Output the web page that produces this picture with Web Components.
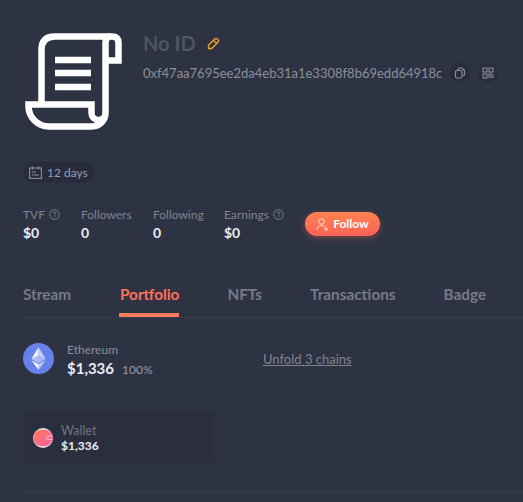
<!DOCTYPE html>
<html><head><meta charset="utf-8">
<style>
html,body{margin:0;padding:0;background:#2e3343;height:502px;overflow:hidden}
body{font-family:Lato,"Noto Sans",sans-serif;color:#fff}
</style></head><body>
<profile-page></profile-page>
<script>
function def(name,html){
  customElements.define(name,class extends HTMLElement{
    constructor(){super();this.attachShadow({mode:'open'}).innerHTML=html;}
  });
}
def('profile-header',`<style>
:host{display:flex;gap:20px;padding:32px 0 0 25px;height:100px;box-sizing:content-box}
svg.logo{width:98px;height:98px;flex:none;margin-top:1px}
.info{display:flex;flex-direction:column}
.name{display:flex;align-items:center;gap:11px;height:22px}
h1{margin:0;font:700 20px/22px Lato;color:#50555f}
.addr{display:flex;align-items:center;margin-top:9px;font:400 13px/20px Lato;color:#8a8f99;white-space:nowrap}
.b{width:20px;height:20px;border-radius:50%;background:#282c3b;display:flex;align-items:center;justify-content:center}
.b svg{width:12px;height:12px}
.b.one{margin-left:8px}.b.two{margin-left:8px}
</style>
<svg class="logo" viewBox="0 0 98 98" fill="none" stroke="#fff" stroke-width="6.500">
<path d="M16.500 71V17Q16.500 3.500 30 3.500H87Q93.500 3.500 93.500 10V27.500H80.500"/>
<path d="M80.500 27.500V10Q80.500 3.500 86 3.500"/>
<path d="M80.500 27V80A13.500 13.500 0 0 1 67 93.500H24A20.500 20.500 0 0 1 3.500 73V71.500H66.500V80A7 7 0 0 0 80.500 80"/>
<path d="M30 27H66M30 40H66M30 54H66"/>
</svg>
<div class="info">
<div class="name"><h1>No ID</h1>
<svg width="13" height="13" viewBox="0 0 13 13" fill="none" stroke="#f7a02c" stroke-width="1.300"><path d="M1.500 8.300L8 1.800Q9 .9 10 1.800L11.200 3Q12.100 4 11.200 5L4.700 11.500H1.500zM6.500 3.500l3 3"/></svg></div>
<div class="addr"><span>0xf47aa7695ee2da4eb31a1e3308f8b69edd64918c</span>
<span class="b one"><svg viewBox="0 0 12 12" fill="none" stroke="#8a8f99" stroke-width="1.200"><rect x="1.500" y="3.500" width="6.500" height="7.500" rx="1.200"/><path d="M4 3V2.200Q4 1 5.200 1H8l2.500 2.500V7.500Q10.500 8.500 9 8.500"/></svg></span>
<span class="b two"><svg viewBox="0 0 12 12" fill="none" stroke="#8a8f99" stroke-width="1.100"><rect x="1" y="1" width="4" height="4"/><rect x="7" y="1" width="4" height="4"/><rect x="1" y="7" width="4" height="4"/><path d="M7 11V7H9V11M11 7V11"/></svg></span></div>
</div>`);
def('age-chip',`<style>
:host{display:inline-flex;align-items:center;gap:5px;height:21px;border-radius:11px;background:#282c3b;padding:0 6px;font:400 12px/21px Lato;color:#8da0b8}
svg{width:13px;height:13px}
</style><svg viewBox="0 0 13 13" fill="none" stroke="#8a8f99" stroke-width="1.100"><rect x=".6" y="2" width="11.800" height="10.400"/><path d="M3.500 .5V3.500M9.500 .5V3.500M3 6H7M3 9H10"/></svg><slot></slot>`);
def('stat-item',`<style>
:host{display:flex;flex-direction:column}
.l{display:flex;align-items:center;gap:4px;font:400 12px/15px Lato;color:#7f848e;white-space:nowrap;height:15px}
.v{font:700 14px/18px Lato;color:#e9ecf1;margin-top:2px}
</style><div class="l"><slot name="label"></slot><slot name="help"></slot></div><div class="v"><slot></slot></div>`);
def('follow-button',`<style>
:host{display:inline-flex;align-items:center;justify-content:center;gap:4px;width:75px;height:24px;border-radius:12px;background:linear-gradient(180deg,#ff8451,#fb6257);box-shadow:0 2px 6px rgba(255,110,80,.35);font:700 12px/24px Lato;color:#fff}
svg{width:13px;height:13px}
</style><svg viewBox="0 0 13 13" fill="none" stroke="#ffe4da" stroke-width="1"><circle cx="5.500" cy="3.500" r="2.700"/><path d="M1 12Q1 7.500 5.500 7.500Q7.500 7.500 8.500 8.500M10 9V13M8 11H12"/></svg><slot></slot>`);
def('tab-bar',`<style>
:host{display:flex;align-items:flex-start;gap:48px;margin-left:23px;height:38px;border-bottom:1px solid #363b4c;font:700 15.300px/22px Lato;color:#767b86;box-sizing:content-box}
::slotted(span){display:block;padding-top:4px;height:30px;box-sizing:content-box}
::slotted(.on){color:#ff7059;border-bottom:4px solid #ff7a5c;padding-left:1px}
</style><slot></slot>`);
def('chain-row',`<style>
:host{display:flex;align-items:flex-start;margin-left:23px;height:37px}
.ic{width:31px;height:31px;flex:none}
.t{margin-left:13px;width:196px}
.n{font:400 12px/15px Lato;color:#8a8f99;margin-top:-1px}
.a{display:flex;align-items:baseline;gap:8px;font:700 15px/19px Lato;color:#e9ecf1;margin-top:2px}
.a small{font:400 12px/15px Lato;color:#969ba5}
.u{font:400 13px/17px Lato;color:#7f848e;text-decoration:underline;white-space:nowrap;margin-top:8px}
</style><svg class="ic" viewBox="0 0 31 31"><circle cx="15.500" cy="15.500" r="15.500" fill="#6681ea"/><path d="M15.500 4L8.500 15.800 15.500 20z" fill="#f0f2fd"/><path d="M15.500 4L22.500 15.800 15.500 20z" fill="#c6cff7"/><path d="M8.500 17.200L15.500 27V21.300z" fill="#fff"/><path d="M22.500 17.200L15.500 27V21.300z" fill="#c6cff7"/><path d="M8.500 15.800L15.500 12.500 22.500 15.800 15.500 20z" fill="#aab8f3"/></svg><div class="t"><div class="n">Ethereum</div><div class="a">$1,336 <small>100%</small></div></div><div class="u"><slot></slot></div>`);
def('wallet-card',`<style>
:host{display:flex;align-items:center;gap:8px;margin-left:23px;width:192px;height:52px;padding-left:10px;box-sizing:border-box;border-radius:4px;background:#2b2e3d}
svg{width:20px;height:20px;flex:none}
.n{font:400 12.500px/15px Lato;color:#70757f}
.a{font:700 12px/15px Lato;color:#eef0f4}
</style><svg viewBox="0 0 20 20"><defs><linearGradient id="g" x1="0" y1="0" x2="1" y2="1"><stop offset="0" stop-color="#ff7a5a"/><stop offset="1" stop-color="#fb5fa5"/></linearGradient></defs><circle cx="10" cy="10" r="10" fill="#e6e8ea"/><rect x=".3" y="1.800" width="19.400" height="16.400" rx="8" fill="url(#g)"/><path d="M19 8H14.500Q13 8 13 9.800 13 11.500 14.500 11.500H19" fill="none" stroke="#f9b9cc" stroke-width="1"/></svg><div><div class="n">Wallet</div><div class="a">$1,336</div></div>`);
def('profile-page',`<style>
:host{display:block}
.chip{margin:30px 0 0 23px;height:21px}
.stats{display:flex;align-items:flex-start;margin:24px 0 0 23px;height:41px}
.s1{width:58px}.s2{width:72px}.s3{width:71px}.s4{width:81px}
follow-button{margin:5px 0 0 0}
tab-bar{margin-top:31px}
chain-row{margin-top:25px}
wallet-card{margin-top:32px}
.rule{margin:28px 0 0 23px;height:1px;background:#363b4c}
svg.h{width:11px;height:11px}
</style>
<profile-header></profile-header>
<div class="chip"><age-chip>12 days</age-chip></div>
<div class="stats">
<stat-item class="s1"><span slot="label">TVF</span><svg class="h" slot="help" viewBox="0 0 11 11" fill="none" stroke="#7f848e" stroke-width=".9"><circle cx="5.500" cy="5.500" r="4.900"/><path d="M3.900 4.300Q4 2.900 5.500 2.900 7.100 2.900 7.100 4.200 7.100 5 6.200 5.500 5.500 5.900 5.500 6.700M5.500 7.500V8.500"/></svg>$0</stat-item>
<stat-item class="s2"><span slot="label">Followers</span>0</stat-item>
<stat-item class="s3"><span slot="label">Following</span>0</stat-item>
<stat-item class="s4"><span slot="label">Earnings</span><svg class="h" slot="help" viewBox="0 0 11 11" fill="none" stroke="#7f848e" stroke-width=".9"><circle cx="5.500" cy="5.500" r="4.900"/><path d="M3.900 4.300Q4 2.900 5.500 2.900 7.100 2.900 7.100 4.200 7.100 5 6.200 5.500 5.500 5.900 5.500 6.700M5.500 7.500V8.500"/></svg>$0</stat-item>
<follow-button>Follow</follow-button>
</div>
<tab-bar><span>Stream</span><span class="on">Portfolio</span><span>NFTs</span><span>Transactions</span><span>Badge</span></tab-bar>
<chain-row>Unfold 3 chains</chain-row>
<wallet-card></wallet-card>
<div class="rule"></div>`);
</script>
</body></html>
